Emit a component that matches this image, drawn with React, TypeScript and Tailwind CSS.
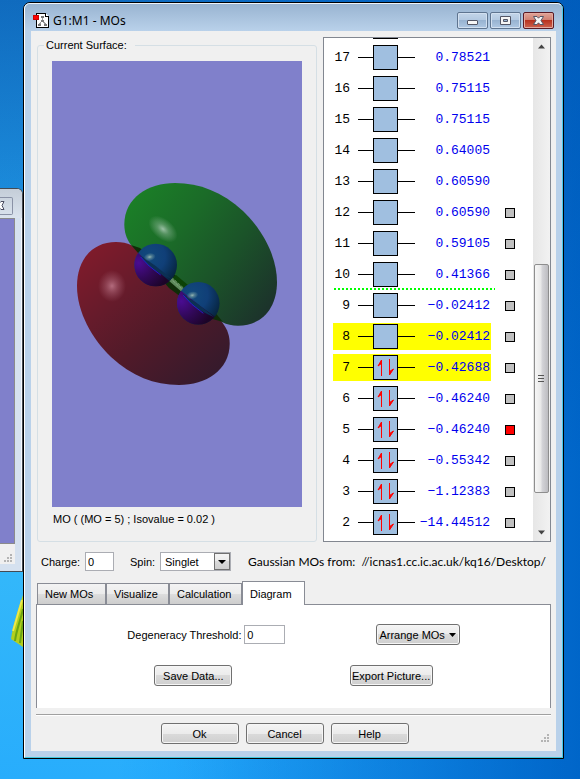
import { useState, type ReactNode } from "react";
import clsx from "clsx";

type Orbital = {
  level: number;
  energy: string;
  occupied?: boolean;
  highlighted?: boolean;
  surface?: boolean;
};

const orbitals: Orbital[] = [
  { level: 17, energy: "0.78521" },
  { level: 16, energy: "0.75115" },
  { level: 15, energy: "0.75115" },
  { level: 14, energy: "0.64005" },
  { level: 13, energy: "0.60590" },
  { level: 12, energy: "0.60590", surface: true },
  { level: 11, energy: "0.59105", surface: true },
  { level: 10, energy: "0.41366", surface: true },
  { level: 9, energy: "−0.02412", surface: true },
  { level: 8, energy: "−0.02412", surface: true, highlighted: true },
  { level: 7, energy: "−0.42688", surface: true, highlighted: true, occupied: true },
  { level: 6, energy: "−0.46240", surface: true, occupied: true },
  { level: 5, energy: "−0.46240", surface: true, occupied: true },
  { level: 4, energy: "−0.55342", surface: true, occupied: true },
  { level: 3, energy: "−1.12383", surface: true, occupied: true },
  { level: 2, energy: "−14.44512", surface: true, occupied: true },
];

const tabs = [
  { name: "New MOs", width: "w-[69px]" },
  { name: "Visualize", width: "w-[63px]" },
  { name: "Calculation", width: "w-[73px]" },
  { name: "Diagram", width: "w-[63px]" },
];

const PushButton = ({ children, className }: { children: ReactNode; className?: string }) => (
  <button
    type="button"
    className={clsx(
      "flex h-[21px] items-center justify-center rounded-[3px] border border-[#707070] bg-[linear-gradient(#f4f4f4,#ebebeb_50%,#dadada_50%,#cfcfcf)] whitespace-nowrap shadow-[inset_0_0_0_1px_#f6f6f6]",
      className
    )}
  >
    {children}
  </button>
);

const ResizeGrip = () => (
  <svg className="h-2 w-2 shrink-0" viewBox="0 0 8 8" fill="#b4b4b4" shapeRendering="crispEdges">
    <path d="M6 0h2v2h-2zM3 3h2v2h-2zM6 3h2v2h-2zM0 6h2v2h-2zM3 6h2v2h-2zM6 6h2v2h-2z" />
  </svg>
);

const CaptionButton = ({ kind }: { kind: "Minimize" | "Maximize" | "Close" }) => (
  <button
    type="button"
    aria-label={kind}
    className={clsx(
      "flex h-[17px] w-[31px] items-center justify-center rounded-[2px] border",
      kind === "Close"
        ? "border-[#5a1a24] bg-[linear-gradient(#e0a498,#cf7f70_48%,#b8321f_50%,#cc6350)] shadow-[inset_0_0_0_1px_#e3aaa0]"
        : "border-[#5f7590] bg-[linear-gradient(#c3d5e9,#b3c9e1_48%,#98b3d1_50%,#afc8e3)] shadow-[inset_0_0_0_1px_#d2e0f0]"
    )}
  >
    <svg width="13" height="11" viewBox="0 0 13 11" fill="#f6f6f6" stroke="#535666">
      {kind === "Minimize" && <rect x="1.5" y="5.5" width="10" height="4" rx="0.5" />}
      {kind === "Maximize" && (
        <path fillRule="evenodd" d="M1.5 1.5h10v8h-10zM4.5 4.5v2h4v-2z" />
      )}
      {kind === "Close" && (
        <path d="M1.5 1.5h3.5l1.5 1.7L8 1.5h3.500L9 5.5l2.500 4H8L6.5 7.8 5 9.5H1.5l2.500-4z" />
      )}
    </svg>
  </button>
);

const AppIcon = () => (
  <svg width="17" height="17" viewBox="0 0 17 17" shapeRendering="crispEdges">
    <path d="M3.5 1.5h9l3 3v11h-12z" fill="#fff" stroke="#000" />
    <path d="M12.5 1.5v3h3" fill="#fff" stroke="#000" />
    <path d="M9.5 5v5M9 9l-3 4M10 9l3 4" stroke="#999" fill="none" />
    <path d="M8 4h3v2H8zM8 8h3v2H8zM5 12h3v2H5zM11 12h3v2h-3z" fill="#777" />
    <rect x="0.5" y="3.5" width="5" height="4" fill="#f00" stroke="#c00" />
  </svg>
);

const OrbitalSurface = () => (
  <svg
    role="img"
    aria-label="Molecular orbital surface"
    className="block h-[446px] w-full bg-[#8080cb]"
    viewBox="52 61 250 446"
    preserveAspectRatio="xMidYMid slice"
  >
    <defs>
      <linearGradient id="green" x1="0" y1="0.1" x2="1" y2="0.8">
        <stop offset="0" stopColor="#1b8127" />
        <stop offset="0.35" stopColor="#1b6b28" />
        <stop offset="0.65" stopColor="#1b5329" />
        <stop offset="1" stopColor="#1c332b" />
      </linearGradient>
      <linearGradient id="red" x1="0" y1="0.05" x2="0.85" y2="1">
        <stop offset="0" stopColor="#831b2b" />
        <stop offset="0.35" stopColor="#651b2b" />
        <stop offset="0.6" stopColor="#511a29" />
        <stop offset="1" stopColor="#341a2c" />
      </linearGradient>
      <radialGradient id="shine">
        <stop offset="0" stopColor="#b9d3c2" stopOpacity="0.8" />
        <stop offset="0.4" stopColor="#a9c7b2" stopOpacity="0.4" />
        <stop offset="1" stopColor="#a9c7b2" stopOpacity="0" />
      </radialGradient>
      <radialGradient id="shineRed">
        <stop offset="0" stopColor="#c07a8c" stopOpacity="0.85" />
        <stop offset="0.4" stopColor="#b06a7c" stopOpacity="0.5" />
        <stop offset="1" stopColor="#a05a6c" stopOpacity="0" />
      </radialGradient>
      <radialGradient id="blue" cx="0.35" cy="0.3" r="0.75">
        <stop offset="0" stopColor="#124a7c" />
        <stop offset="0.5" stopColor="#103f78" />
        <stop offset="1" stopColor="#06233c" />
      </radialGradient>
      <radialGradient id="purple" cx="0.1" cy="0.45" r="0.75">
        <stop offset="0" stopColor="#4a0c92" />
        <stop offset="0.5" stopColor="#310858" />
        <stop offset="1" stopColor="#1c0428" />
      </radialGradient>
      {/* everything on the red side of the nodal plane */}
      <clipPath id="lowerHalf">
        <path d="M115 229Q160 278 222 322L240 420H90V229Z" />
      </clipPath>
    </defs>

    <path
      fill="url(#red)"
      d="M222 322C228 330 229.5 336 229.7 343C230 370 206 385 179 385C154 385 132 376 111 357C92 339 77 312 77 286C77 260 92 242 116 242C122 242 127 243 131 245Z"
    />
    <path
      fill="url(#green)"
      d="M131 245C126 238 124.5 232 124.3 225C124 198 148 183 175 183C200 183 222 192 243 211C262 229 277 256 277 282C277 308 262 325.7 238 325.7C232 325.7 227 324.5 222 322Z"
    />
    <ellipse cx="163" cy="229" rx="17" ry="10" fill="url(#shine)" transform="rotate(40 163 229)" />
    <ellipse cx="112" cy="286" rx="14" ry="16" fill="url(#shineRed)" />

    {/* nodal plane and the bond between the two atoms */}
    <path d="M131 245l9 3 40 31 33 31 10 12-14-4-40-30z" fill="#0f2d08" />
    <path d="M171 279l5-4 18 15-5 6z" fill="#0c4206" />
    <path d="M168 280l3-3 14 13-2 3z" fill="#5f8a5c" />
    <path d="M170 278l14 13M172 277.5l12 11" stroke="#8fb48a" strokeDasharray="1 1" />

    {[
      [155.7, 265],
      [198.3, 303.3],
    ].map(([cx, cy]) => (
      <g key={cx}>
        <circle cx={cx} cy={cy} r="21.3" fill="url(#blue)" />
        <circle cx={cx} cy={cy} r="21.3" fill="url(#purple)" clipPath="url(#lowerHalf)" />
        <path
          d={`M${cx - 16} ${cy - 10}Q${cx - 8} ${cy + 4} ${cx + 16} ${cy + 14}L${cx} ${cy + 1}Z`}
          fill="#0c3054"
        />
        <path
          d={`M${cx - 15} ${cy - 8}Q${cx - 8} ${cy + 1} ${cx + 5} ${cy + 10}`}
          fill="none"
          stroke="#2222e8"
          strokeWidth="0.8"
        />
        <ellipse
          cx={cx - 6}
          cy={cy - 8}
          rx="6"
          ry="4"
          fill="url(#shine)"
          transform={`rotate(-12 ${cx - 6} ${cy - 8})`}
        />
      </g>
    ))}
  </svg>
);

const OrbitalRow = ({ orbital }: { orbital: Orbital }) => (
  <li className="relative flex h-[31px] shrink-0 items-center gap-3.5 pl-[9px]">
    <div
      className={clsx(
        "flex h-[27px] w-[158px] items-center pr-px",
        orbital.highlighted && "bg-[#ffff00]"
      )}
    >
      <span className="w-[17px] text-right">{orbital.level}</span>
      <span className="ml-2 h-px w-[15px] bg-black" />
      <span className="flex h-[25px] w-[25px] items-center justify-center border border-black bg-[#a0bfe0]">
        {orbital.occupied && (
          <svg width="19" height="19" viewBox="0 0 19 19" fill="#f00" stroke="#f00" strokeLinejoin="round">
            <path d="M5.5 18V2L2 8l3.5-2.5M13.5 1v16l4-6-4 2.5" />
          </svg>
        )}
      </span>
      <span className="h-px w-[17px] bg-black" />
      <span className="-ml-4 flex-1 text-right whitespace-nowrap text-[#0000ee]">{orbital.energy}</span>
    </div>
    {orbital.surface && (
      <input
        type="checkbox"
        aria-label={`Surface for MO ${orbital.level}`}
        defaultChecked={orbital.level === 5}
        className="h-2.5 w-2.5 appearance-none border border-black bg-[#c0c0c0] checked:bg-[#ff0000]"
      />
    )}
    {orbital.level === 10 && (
      <span className="absolute bottom-0 left-2.5 h-0.5 w-[161px] bg-[repeating-linear-gradient(90deg,#00ff00_0_2px,transparent_2px_4px)]" />
    )}
  </li>
);

const ScrollBar = () => (
  <div className="flex w-[17px] shrink-0 flex-col items-center bg-[linear-gradient(90deg,#e6e6e6,#f2f2f2)]">
    <svg className="h-[17px] w-[17px]" viewBox="0 0 17 17">
      <path d="M5 10.5l3.5-4 3.5 4z" fill="#444" />
    </svg>
    <div className="mt-[209px] flex h-[229px] w-[15px] items-center justify-center rounded-[2px] border border-[#8e8e8e] bg-[linear-gradient(90deg,#f6f6f6,#e9e9e9_45%,#d4d4d8_55%,#bcbcc0)]">
      <svg width="7" height="8" viewBox="0 0 7 8" fill="#555" shapeRendering="crispEdges">
        <path d="M0 0h6v1H0zM0 3h6v1H0zM0 6h6v1H0z" />
      </svg>
    </div>
    <svg className="mt-auto h-[17px] w-[17px]" viewBox="0 0 17 17">
      <path d="M5 6.5l3.5 4 3.5-4z" fill="#444" />
    </svg>
  </div>
);

const BackgroundWindow = () => (
  <div className="absolute top-[188px] left-0 flex h-[384px] w-[23px] flex-col overflow-hidden rounded-tr-md border-t border-r border-b border-[#444a52] bg-[#d5e1ef] shadow-[inset_-1px_1px_0_#f4f8fc]">
    <div className="flex h-[29px] shrink-0 items-center bg-[linear-gradient(#c4cdd8,#dbe4ee)] pt-1">
      <span className="flex h-[18px] w-[13px] items-center rounded-r-[2px] border border-l-0 border-[#8a92a6]">
        <svg width="5" height="9" viewBox="0 0 5 9" fill="#fff" stroke="#4a4c60">
          <path d="M-4 .5h3l1 1 1-1h3L2 4.5l2 4H1l-1-1-1 1h-3" />
        </svg>
      </span>
    </div>
    <div className="w-[15px] flex-1 border-t border-r border-b border-[#8b8b8b] bg-[#8080cb]" />
    <div className="flex h-5 w-[15px] shrink-0 items-end justify-center bg-[#f0f0f0] pb-0.5">
      <ResizeGrip />
    </div>
    <div className="h-[7px] shrink-0" />
  </div>
);

export default function App() {
  const [activeTab, setActiveTab] = useState("Diagram");

  return (
    <div className="relative min-h-screen bg-[linear-gradient(90deg,transparent_30%,#00388866),linear-gradient(#00388833,transparent_60%),linear-gradient(90deg,transparent_20%,#0084f4_100%),linear-gradient(#1478cc,#1f96e6_25%,#34b8fa_72%,#28adfc)] pt-0.5 pr-4 pb-5 pl-[23px] font-['Liberation_Sans',sans-serif] text-[11px] leading-4 text-black">
      <svg className="absolute top-[595px] left-2.5" width="13" height="54" viewBox="0 0 13 54">
        <path d="M13 0C9 12 3 30 1 44l12 8z" fill="#b3cf1c" />
        <path d="M13 14C11 24 6 36 5 46M13 26l-3 22" stroke="#6ba513" fill="none" strokeWidth="2" />
        <path d="M12 5L3 36" stroke="#eee84a" strokeWidth="2" />
      </svg>
      <BackgroundWindow />

      <main className="relative rounded-t-[7px] border border-black bg-[#b9d1ea]">
        <div className="rounded-t-md border border-t-[#eef4fa] border-r-[#45c8ee] border-b-[#45c8dc] border-l-white px-1.5 pb-1.5">
          <header className="-mx-1.5 flex h-[27px] items-center rounded-t-[5px] bg-[linear-gradient(#99b4d1,#b9d1ea)] pt-1.5 pr-2 pl-2">
            <AppIcon />
            <h1 className="ml-[3px] flex-1 font-['Noto_Sans',sans-serif] text-xs">G1:M1 - MOs</h1>
            <div className="flex gap-0.5">
              <CaptionButton kind="Minimize" />
              <CaptionButton kind="Maximize" />
              <CaptionButton kind="Close" />
            </div>
          </header>

          <div className="bg-[#f0f0f0] pt-1.5 pr-[5px] pb-[7px] pl-[5px]">
            <div className="flex gap-1.5 pl-px">
              <fieldset className="min-w-0 flex-1 rounded-[3px] border border-[#d5dfe5] px-1.5 pb-[13px]">
                <legend className="h-4 pr-2 pl-0.5">Current Surface:</legend>
                <div className="px-2 pt-2">
                  <OrbitalSurface />
                  <p className="pt-1 pl-px">MO ( (MO = 5) ; Isovalue = 0.02 )</p>
                </div>
              </fieldset>
              <div className="flex h-[505px] w-[228px] shrink-0 border border-[#828790] bg-white">
                <div className="flex flex-1 flex-col justify-between overflow-hidden pb-[3px] font-['Liberation_Mono',monospace] text-[13px]">
                  {/* lower edge of the box scrolled out above */}
                  <span className="ml-[49px] h-px w-[25px] bg-black" />
                  <ul className="flex flex-col">
                    {orbitals.map((orbital) => (
                      <OrbitalRow key={orbital.level} orbital={orbital} />
                    ))}
                  </ul>
                </div>
                <ScrollBar />
              </div>
            </div>

            <div className="mt-2.5 flex h-[19px] items-center pl-[5px] whitespace-nowrap">
              <label htmlFor="charge" className="w-11 shrink-0">Charge:</label>
              <input
                id="charge"
                defaultValue="0"
                className="h-[19px] w-[29px] shrink-0 border border-[#abadb3] bg-white px-0.5"
              />
              <label htmlFor="spin" className="ml-4 w-[30px] shrink-0">Spin:</label>
              <div className="relative w-[71px] shrink-0">
                <select
                  id="spin"
                  className="block h-[19px] w-full appearance-none border border-[#abadb3] bg-white pr-4 pl-1 leading-4"
                >
                  <option>Singlet</option>
                </select>
                <span className="pointer-events-none absolute top-px right-px flex h-[17px] w-4 items-center justify-center border border-[#707070] bg-[linear-gradient(#f4f4f4,#ebebeb_50%,#dadada_50%,#cfcfcf)]">
                  <svg width="8" height="4" viewBox="0 0 8 4">
                    <path d="M0 0h8L4 4z" />
                  </svg>
                </span>
              </div>
              <p className="ml-[17px] font-[Lato,sans-serif] text-xs leading-4 whitespace-pre">
                Gaussian MOs from:  //icnas1.cc.ic.ac.uk/kq16/Desktop/
              </p>
            </div>

            <div role="tablist" className="mt-2.5 flex h-[23px] items-end pl-px">
              {tabs.map(({ name, width }) => (
                <button
                  key={name}
                  type="button"
                  role="tab"
                  aria-selected={name === activeTab}
                  onClick={() => setActiveTab(name)}
                  className={clsx(
                    "border-t border-r border-l border-[#898c95] pl-[7px] text-left",
                    width,
                    name === activeTab
                      ? "relative -mb-px h-6 bg-white"
                      : "h-[21px] bg-[linear-gradient(#f3f3f3,#ebebeb_50%,#dddddd_50%,#cdcdcd)]"
                  )}
                >
                  {name}
                </button>
              ))}
            </div>
            <div
              role="tabpanel"
              className="flex flex-col gap-5 border-t border-r border-l border-[#898c95] bg-white pt-[19px] pb-[22px]"
            >
              <div className="flex items-center justify-evenly">
                <div className="flex items-center">
                  <label htmlFor="threshold" className="w-[117px] whitespace-nowrap">Degeneracy Threshold:</label>
                  <input
                    id="threshold"
                    defaultValue="0"
                    className="h-[19px] w-[41px] border border-[#abadb3] bg-white px-0.5"
                  />
                </div>
                <PushButton className="w-[84px] gap-1">
                  Arrange MOs
                  <svg width="7" height="4" viewBox="0 0 7 4">
                    <path d="M0 0h7L3.5 4z" />
                  </svg>
                </PushButton>
              </div>
              <div className="flex items-center justify-evenly">
                <PushButton className="w-[78px]">Save Data...</PushButton>
                <PushButton className="w-[83px]">Export Picture...</PushButton>
              </div>
            </div>

            <hr className="mt-1.5 h-0.5 border-t border-b border-t-[#a0a0a0] border-b-white" />
            <footer className="mt-[7px] flex items-end">
              <div className="flex flex-1 justify-center gap-[7px] pl-1.5">
                <PushButton className="w-[78px]">Ok</PushButton>
                <PushButton className="w-[78px]">Cancel</PushButton>
                <PushButton className="w-[78px]">Help</PushButton>
              </div>
              <div className="w-6 pb-0.5 pl-3.5">
                <ResizeGrip />
              </div>
            </footer>
          </div>
        </div>
      </main>
    </div>
  );
}
